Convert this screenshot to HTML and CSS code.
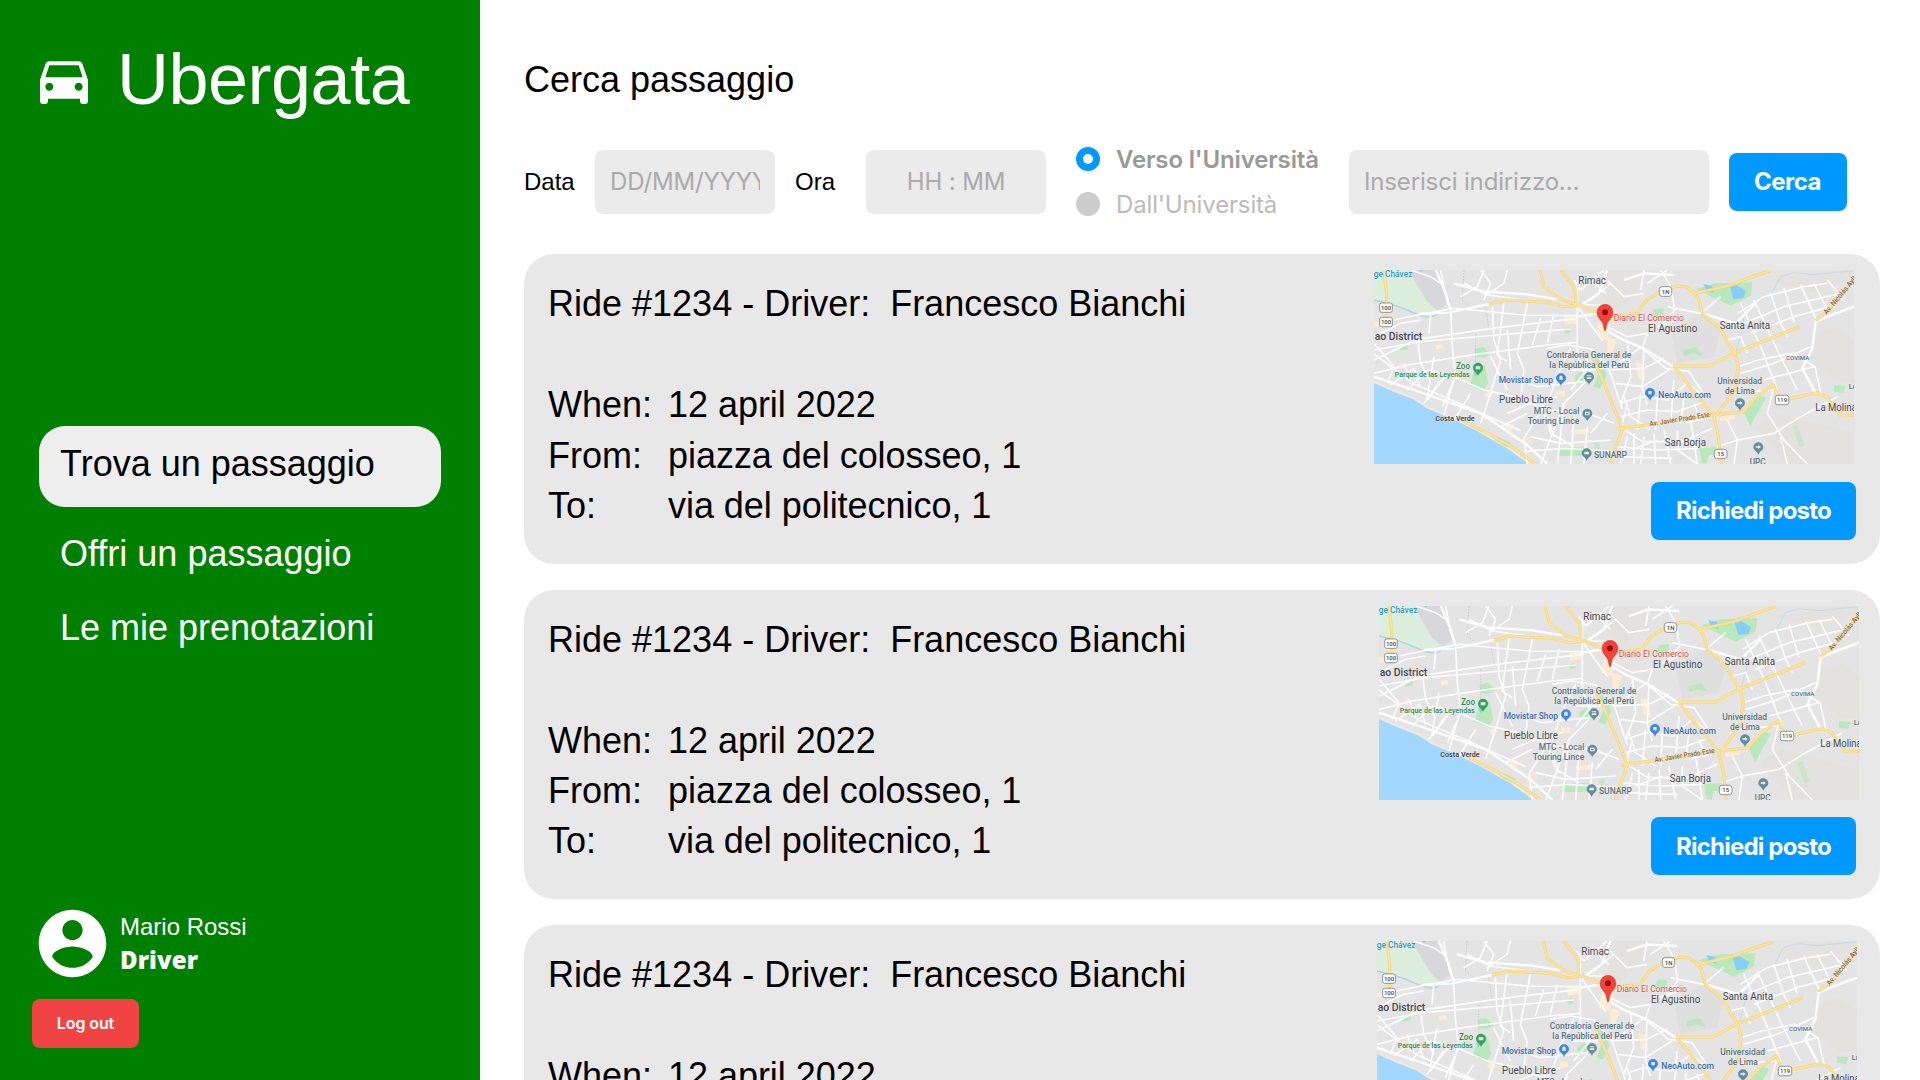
FILE: index.html
```html
<!DOCTYPE html>
<html lang="it">
<head>
<meta charset="utf-8">
<title>Ubergata</title>
<link rel="stylesheet" href="styles.css">
</head>
<body>
<div class="app">
  <aside class="sidebar">
    <header class="brand">
      <svg class="brand-icon" viewBox="0 0 24 24"><path d="M18.92 6.01C18.72 5.42 18.16 5 17.5 5h-11c-.66 0-1.21.42-1.42 1.01L3 12v8c0 .55.45 1 1 1h1c.55 0 1-.45 1-1v-1h12v1c0 .55.45 1 1 1h1c.55 0 1-.45 1-1v-8l-2.08-5.99zM6.5 16c-.83 0-1.5-.67-1.5-1.5S5.67 13 6.5 13s1.5.67 1.5 1.5S7.33 16 6.5 16zm11 0c-.83 0-1.5-.67-1.5-1.5s.67-1.5 1.5-1.5 1.5.67 1.5 1.5-.67 1.5-1.5 1.5zM5 11l1.5-4.5h11L19 11H5z"/></svg>
      <span class="brand-name">Ubergata</span>
    </header>
    <nav class="nav">
      <a class="nav-item active">Trova un passaggio</a>
      <a class="nav-item">Offri un passaggio</a>
      <a class="nav-item">Le mie prenotazioni</a>
    </nav>
    <div class="account">
      <div class="user">
        <svg class="avatar" viewBox="0 0 24 24"><path d="M12 2C6.48 2 2 6.48 2 12s4.48 10 10 10 10-4.48 10-10S17.52 2 12 2zm0 3c1.66 0 3 1.34 3 3s-1.34 3-3 3-3-1.34-3-3 1.34-3 3-3zm0 14.2c-2.5 0-4.71-1.28-6-3.22.03-1.99 4-3.08 6-3.08 1.99 0 5.97 1.09 6 3.08-1.29 1.94-3.5 3.22-6 3.22z"/></svg>
        <div class="user-text">
          <span class="user-name">Mario Rossi</span>
          <span class="user-role">Driver</span>
        </div>
      </div>
      <button class="logout">Log out</button>
    </div>
  </aside>

  <main class="content">
    <h1 class="title">Cerca passaggio</h1>
    <form class="search">
      <label class="field-label">Data</label>
      <input class="field field-date" placeholder="DD/MM/YYYY">
      <label class="field-label">Ora</label>
      <input class="field field-time" placeholder="HH : MM">
      <div class="radios">
        <div class="radio checked"><i class="dot"></i><span>Verso l'Università</span></div>
        <div class="radio"><i class="dot"></i><span>Dall'Università</span></div>
      </div>
      <input class="field field-address" placeholder="Inserisci indirizzo...">
      <button class="button" type="button">Cerca</button>
    </form>
    <section class="rides" id="rides"></section>
  </main>
</div>

<template id="ride-template">
  <article class="ride">
    <div class="ride-info">
      <p class="ride-head">Ride #1234 - Driver:  Francesco Bianchi</p>
      <dl class="ride-data">
        <dt>When:</dt><dd>12 april 2022</dd>
        <dt>From:</dt><dd>piazza del colosseo, 1</dd>
        <dt>To:</dt><dd>via del politecnico, 1</dd>
      </dl>
    </div>
    <div class="ride-side">
      <svg class="map" viewBox="0 0 1440 582">
        <rect width="1440" height="582" fill="#e4e4e5"/>
        <g fill="#e3e2df">
          <path d="M690 0h130l-40 75-55 50-50-60z"/><path d="M1330 190l60-20 50 40v130l-60-10-70-60z"/><path d="M1140 470l70-40 230 60v92h-200z"/><path d="M890 180l90-50 60 50-20 80-110 20z" fill="#dfdfdf"/><path d="M1190 30l100-20 150-10v20l-110 50z"/>
        </g>
        <path d="M0 0h105l55 95 38 28-50 6L60 112 0 90z" fill="#dcefdd"/>
        <path d="M103 0h80l45 95-38 27-30-27z" fill="#d8d8da"/>
        <path d="M0 335l60 27 60 23 40 27 90 38 60 30 90 52 70 50H0z" fill="#a2d8ff"/>
        <path d="M0 335l60 27 60 23 40 27 90 38 60 30 90 52 70 50" fill="none" stroke="#efe9df" stroke-width="7"/>
        <g fill="#b9e8bd">
          <path d="M300 300l32-15 10 55-15 22-40-15z"/><path d="M302 236l25-6 22 22-18 12-28-4z"/><path d="M78 225l20-3 4 16-24 4z"/><path d="M600 320l30-22 25 12-10 28-40 2z"/><path d="M655 272l18-8 25 50-20 42-20-6 15-40z"/><path d="M556 532h75l5 24-80 3z"/><path d="M965 58l60-18 110-3-5 40-60 30-25-12z"/><path d="M840 118l30-4-4 32-36-2z"/><path d="M928 240l40-8 18 26-30-8-26 8z"/><path d="M1108 425l50-48 18 8-35 60-12 24z"/><path d="M975 535l50-4v20l-22 6-5 24-15-2z"/><path d="M1380 345l35 4-8 20-27-4z"/><path d="M1255 470l15-5 22 60-15 8z" opacity=".6"/><path d="M570 178l15-7 5 15-15 5z"/><path d="M372 500l38 18-12 14-36-22z"/><path d="M660 520l16-3 2 45-16 4z" opacity=".7"/>
        </g>
        <path d="M988 42l26 6 6 20-22-4zM1068 52l20-6 28 18-8 20-30 4zM135 0h12l-7 5zM298 305l12 5-6 10z" fill="#86cdf8"/>
        <g fill="#fbecd2">
          <path d="M570 140l40-8v28l-38 4z"/><path d="M672 160l38 5-12 45-30-8z"/><path d="M700 200l30 10-18 45-12-5z"/><path d="M785 275l24 8 6 50-22-8z"/><path d="M395 460l25 5-8 20-20-8z"/><path d="M185 225l20-3 4 12-22 5z"/><path d="M1038 440l45-8v14l-45 8z"/><path d="M546 362h28v16l-24 4z"/><path d="M590 480l50-4v16h-48z"/><path d="M330 372l20-8 6 14-18 8z"/><path d="M0 155h20v14H0z"/>
        </g>
        <path d="M50 298l38-24 12 20-22 6zM443 510l25-12 8 22-32 8zM268 258l24-4v20z" fill="#f8e1e1"/>
        <path d="M0 90q60 12 115 37t75 3l155-28" fill="none" stroke="#a5d5e6" stroke-width="4"/>
        <path d="M1190 75l30-55 40-12 60 6 120-12M1085 250l20-70 5-60" fill="none" stroke="#bcd8ea" stroke-width="2.5"/>
        <path d="M270 0l-5 90 30 25M305 190v130M148 370l30-15M335 110l10 70" fill="none" stroke="#bfbfc3" stroke-width="2" stroke-dasharray="5 4"/>
        <g class="roads minor">
          <path d="M60 150l70-15 110-20 210 20 160 2M0 270l130-62 240-35 240-28M0 240l140-25 230-20 220-18M0 310l100-25 180-28 240-32 90-8M0 252l120 90 140 60 180 80"/>
          <path d="M200 0l15 80 15 40 5 110 10 90-40 90M170 130l-5 60M130 200l10 80 30 60M270 40l70 35 110 15 60 5M330 0l-20 50-50 30M355 110l5 100 20 60-40 130-20 60M390 95l-20 160 30 20M460 100l-30 150 20 50M500 145l-25 80M540 130l-20 90"/>
          <path d="M90 280l20 50M60 290l-20 50M180 260l-20 120M200 330l-50 70M100 360l60-60 80 20 90 40 90 20M240 325l-30 110M290 370l-50 80M350 260l50 100M400 180l10 120"/>
          <path d="M610 50v200l20 60-40 50M606 102l50 70 30 40M640 20l55 50M620 60l70-60M650 90l60-50M620 60l-20-30M700 30l50 50 60-10M800 60l10-60M820 40l60-40M860 0l30 50 12 70-30 40M880 110l100 20 60-50"/>
          <path d="M520 235l60-10 70 12 55 60 40 120M590 235l-40 80-20 60-80 130 10 77M640 260l-10 80-60 60-70 182M440 390l90 30 110 10 80 30M400 430l70-30 80-20M380 470l80-40M470 500l90 20 150-10M450 545l120-10 150 10M500 400l30 90 70 40M570 400l-20 182M520 440l20 60M600 440l-10 142M640 470l-10 112M430 330l60 20 140-15M450 300l-10 90"/>
          <path d="M700 170l60 30 60-10-15 45 70 60 70 10 40 60M800 232l-80 60M810 235l-5 120 15 50M760 210l10 110-30 80M700 300l110-5 60-30M725 340l80 10 80-50M740 400l60-20 80 10 60-50 40 30M750 380l20 60 60 40M740 440l80-20 90 5 80-30M760 400l-20 80M800 370l-10 110M850 380l-5 100M900 330l-10 130M930 380l-10 80M960 400l20 50"/>
          <path d="M745 475l60 40 120 0 90-40M760 500l-20 82M780 490v92M810 500l-10 82M840 490l5 92M720 530l130 10 120-5M735 560l160 5M870 480l20 102M910 480v60l60 42M700 430l-50 60M950 450l20 132M770 540l80-30M1060 450l30 60-10 72M1090 510l110-20 80-50 110-60M1200 350l-20 80 50 80 70 72M1220 500l20 82M1090 510l-60 20"/>
          <path d="M1093 290l60-20 100-20 70 40 20 90M1100 310l100-30 110-50M1080 370l110-10M1170 330l150-40M1100 100l60 130 50 130M1140 90l70 150 60 120M1060 210l40-10 20 50M1090 130l80-50 120-30 70-10M1110 160l120-50 170-40M1130 190l130-50 110-30M1190 70l30 90 20 40M1230 55l30 100M1280 45l50 110M1320 40l40 80M1360 30l50 60"/>
          <path d="M650 300l70-10M320 0l30 40-20 50M400 0l-10 40-60 40M110 0l60 20 30 20M0 200l80-40 60-10M0 220l60 70M620 105l70 0M590 300l70 0M50 345l70-50 20 60M160 390l60-80"/>
        </g>
        <g class="roads white">
          <path d="M185 0l30 70 15 50M345 102l-120 25-90 5M240 40l90 25 130 8 90 15"/>
          <path d="M1440 110l-80 30-35 15-10 80-30 60 40 75M985 130l100 30 60-60M898 290l-90-55-70-30-50-30M1018 437l-80 20M700 0l-25 70-60 40M750 30l60-20 90 5"/>
          <path d="M0 320l120 40 200 70 140 95 60 57M610 140l60-10M850 170l80-30"/>
        </g>
        <g class="roads edge"><path d="M30 0l8 75v85M345 102l55-12 120 7 50 13 50-5 48 22M498 0l12 50 50 38 45 15M560 0l43 55 3 47M700 140l88-10 30-40 40-25 50-17 27 2 28 20 97-22 90-33 40-13M950 60l23 25 12 45 53 45 22 40 23 35 10 40-13 75-50 65-10 10 13 60 10 82M898 288h110l70-38 100-40 100-40M898 288l120 149M728 477l110-15 180-27 90-10 40-45 50-36 20 48 110-24 30 12 40 55 42 1M655 262l35 78 55 137-30 83-5 22M270 455l80 40 70 40 65 47M1325 152l43-34 72-93"/></g>
        <g class="roads yellow"><path d="M30 0l8 75v85M345 102l55-12 120 7 50 13 50-5 48 22M498 0l12 50 50 38 45 15M560 0l43 55 3 47M700 140l88-10 30-40 40-25 50-17 27 2 28 20 97-22 90-33 40-13M950 60l23 25 12 45 53 45 22 40 23 35 10 40-13 75-50 65-10 10 13 60 10 82M898 288h110l70-38 100-40 100-40M898 288l120 149M728 477l110-15 180-27 90-10 40-45 50-36 20 48 110-24 30 12 40 55 42 1M655 262l35 78 55 137-30 83-5 22M270 455l80 40 70 40 65 47M1325 152l43-34 72-93"/></g>
        <g class="shields">
          <rect x="17" y="99" width="38" height="28" rx="6"/><rect x="17" y="142" width="38" height="28" rx="6"/><rect x="856" y="50" width="37" height="29" rx="8"/><rect x="1204" y="376" width="40" height="28" rx="6"/><rect x="1021" y="538" width="38" height="28" rx="8"/>
        </g>
        <g class="shield-text">
          <text x="36" y="120">100</text><text x="36" y="163">100</text><text x="875" y="72">1N</text><text x="1224" y="397">119</text><text x="1040" y="559">15</text>
        </g>
        <g class="pins">
          <g fill="#35a457"><path d="M312 318c-4-12-15-13-15-25a15 15 0 0 1 30 0c0 12-11 13-15 25z"/></g>
          <g fill="#3f87e5"><path d="M561 348c-4-12-15-13-15-23a15 15 0 0 1 30 0c0 10-11 11-15 23zM828 392c-4-12-15-13-15-23a15 15 0 0 1 30 0c0 10-11 11-15 23z"/></g>
          <g fill="#668d9e"><path d="M645 345c-4-12-15-13-15-23a15 15 0 0 1 30 0c0 10-11 11-15 23zM640 454c-4-12-15-13-15-23a15 15 0 0 1 30 0c0 10-11 11-15 23zM638 573c-4-12-15-13-15-23a15 15 0 0 1 30 0c0 10-11 11-15 23zM1098 423c-4-12-15-13-15-23a15 15 0 0 1 30 0c0 10-11 11-15 23zM1153 555c-4-12-15-13-15-23a15 15 0 0 1 30 0c0 10-11 11-15 23z"/></g>
          <g fill="#e9f2f5"><path d="M305 289h14v9h-14zM556 320l5-4 5 4v9h-10zM823 363h10v10h-10zM638 316h14v3h-14zM638 322h14v5h-14zM633 425h14v11h-14zM636 429v4h8v-4zM631 545h14v8h-14zM1090 397h8v-4l8 6-8 6v-4h-8zM1145 529h8v-4l8 6-8 6v-4h-8z"/></g>
        </g>
        <g class="places">
          <text x="613" y="43" textLength="83" lengthAdjust="spacingAndGlyphs">Rimac</text>
          <text class="strong" x="2" y="209" textLength="143" lengthAdjust="spacingAndGlyphs">ao District</text>
          <text x="375" y="400" textLength="162" lengthAdjust="spacingAndGlyphs">Pueblo Libre</text>
          <text x="822" y="187" textLength="148" lengthAdjust="spacingAndGlyphs">El Agustino</text>
          <text x="1037" y="176" textLength="151" lengthAdjust="spacingAndGlyphs">Santa Anita</text>
          <text x="872" y="529" textLength="124" lengthAdjust="spacingAndGlyphs">San Borja</text>
          <text x="1324" y="424" textLength="124" lengthAdjust="spacingAndGlyphs">La Molina</text>
        </g>
        <g class="poi">
          <text class="air" x="-1" y="22" textLength="116" lengthAdjust="spacingAndGlyphs">ge Chávez</text>
          <text class="green" x="246" y="296" textLength="42" lengthAdjust="spacingAndGlyphs">Zoo</text>
          <text class="green small" x="62" y="320" textLength="225" lengthAdjust="spacingAndGlyphs">Parque de las Leyendas</text>
          <text x="518" y="264" textLength="254" lengthAdjust="spacingAndGlyphs">Contraloría General de</text>
          <text x="526" y="293" textLength="239" lengthAdjust="spacingAndGlyphs">la República del Perú</text>
          <text class="blue" x="374" y="340" textLength="163" lengthAdjust="spacingAndGlyphs">Movistar Shop</text>
          <text x="479" y="431" textLength="137" lengthAdjust="spacingAndGlyphs">MTC - Local</text>
          <text x="461" y="462" textLength="155" lengthAdjust="spacingAndGlyphs">Touring Lince</text>
          <text class="dark small" x="184" y="452" textLength="118" lengthAdjust="spacingAndGlyphs">Costa Verde</text>
          <text x="660" y="564" textLength="99" lengthAdjust="spacingAndGlyphs">SUNARP</text>
          <text class="red" x="719" y="152" textLength="211" lengthAdjust="spacingAndGlyphs">Diario El Comercio</text>
          <text class="tiny" x="1236" y="271" textLength="70" lengthAdjust="spacingAndGlyphs">COVIMA</text>
          <text x="1030" y="342" textLength="134" lengthAdjust="spacingAndGlyphs">Universidad</text>
          <text x="1053" y="371" textLength="89" lengthAdjust="spacingAndGlyphs">de Lima</text>
          <text class="blue" x="853" y="385" textLength="158" lengthAdjust="spacingAndGlyphs">NeoAuto.com</text>
          <text class="small" x="1424" y="358">La</text>
          <text x="1127" y="586" textLength="48" lengthAdjust="spacingAndGlyphs">UPC</text>
          <text class="brown" transform="translate(828 469) rotate(-9)" textLength="182" lengthAdjust="spacingAndGlyphs">Av. Javier Prado Este</text>
          <text class="brown" transform="translate(1358 135) rotate(-50)" textLength="165" lengthAdjust="spacingAndGlyphs">Av. Nicolás Ayllón</text>
        </g>
        <path d="M693 183c-4 0-3-18-9-27-6-8-15-16-15-29a24 24 0 0 1 48 0c0 13-9 21-15 29-6 9-5 27-9 27z" fill="#f0433a" stroke="#d3372f" stroke-width="1.5"/>
        <circle cx="693" cy="127" r="9" fill="#9a0d10"/>
      </svg>
      <button class="button">Richiedi posto</button>
    </div>
  </article>
</template>
<script src="app.js"></script>
</body>
</html>
```

FILE: app.js
```js
// Fill the results list with one card per ride.
const list = document.getElementById('rides');
const template = document.getElementById('ride-template');
for (let i = 0; i < 3; i++) {
  list.appendChild(template.content.cloneNode(true));
}
```

FILE: styles.css
```css
* { box-sizing: border-box; }

body {
  margin: 0;
  background: #fff;
  color: #000;
  font-family: "Liberation Sans", Arial, sans-serif;
}

.app {
  display: flex;
  width: 1920px;
  height: 1080px;
  overflow: hidden;
}

.sidebar {
  display: flex;
  flex-direction: column;
  flex: none;
  width: 480px;
  padding: 38px 39px 32px 32px;
  background: #008000;
  color: #fff;
}

.brand {
  display: flex;
  align-items: center;
  gap: 21px;
  height: 82px;
}

.brand-icon { width: 64px; height: 64px; margin-top: 2px; fill: #fff; }
.brand-name { font-size: 72px; line-height: 82px; letter-spacing: -.5px; }

.nav {
  display: flex;
  flex-direction: column;
  margin: 306px 0 auto 7px;
}

.nav-item {
  padding: 17px 21px 16px;
  font-size: 36px;
  line-height: 41px;
}

.nav-item.active {
  height: 81px;
  margin-bottom: 9px;
  border-radius: 26px;
  background: #eee;
  color: #000;
}

.account {
  display: flex;
  flex-direction: column;
  align-items: flex-start;
  gap: 15px;
}

.user { display: flex; align-items: center; gap: 8px; }
.avatar { width: 81px; height: 81px; margin-right: -1px; fill: #fff; }
.user-text { display: flex; flex-direction: column; padding-bottom: 2px; font-size: 24px; line-height: 33px; }
.user-role { font-family: "Noto Sans", sans-serif; font-weight: 900; letter-spacing: .1px; }

.logout {
  width: 107px;
  height: 49px;
  padding: 0 0 2px;
  border: 0;
  border-radius: 8px;
  background: #f04444;
  color: #fff;
  font: 600 16px Inter, sans-serif;
  letter-spacing: -.1px;
}

.content {
  flex: 1;
  min-width: 0;
  padding: 59px 40px 0 44px;
}

.title { margin: 0; font-size: 36px; font-weight: 400; line-height: 41px; }

.search {
  display: flex;
  align-items: center;
  height: 80px;
  margin-top: 42px;
}

.field-label { width: 51px; margin-right: 20px; font-size: 24px; }

.field {
  width: 180px;
  height: 64px;
  margin-right: 20px;
  padding: 0 15px 1px;
  border: 0;
  border-radius: 8px;
  background: #ebebeb;
  font: 400 24px Inter, sans-serif;
  letter-spacing: -.15px;
}

.field::placeholder { color: #aaa; opacity: 1; }
.field-time { margin-right: 30px; text-align: center; }
.field-address { width: 360px; }

.radios {
  display: flex;
  flex-direction: column;
  gap: 16px;
  width: 273px;
  padding-bottom: 1px;
}

.radio {
  display: flex;
  align-items: center;
  gap: 16px;
  color: #bbb;
  font: 400 24px/29px Inter, sans-serif;
  letter-spacing: -.15px;
}

.dot { width: 24px; height: 24px; border-radius: 50%; background: #ccc; }
.radio.checked { color: #999; font-weight: 600; }
.radio.checked .dot { border: 7px solid #09f; background: #fff; }

.button {
  height: 58px;
  padding: 0 25px;
  border: 0;
  border-radius: 8px;
  background: #09f;
  color: #fff;
  font: 700 24px Inter, sans-serif;
  letter-spacing: -.5px;
}

.search .button { width: 118px; padding: 0 1px 1px 0; }

.rides {
  display: flex;
  flex-direction: column;
  gap: 26px;
  margin-top: 32.4px;
}

.ride {
  display: flex;
  justify-content: space-between;
  flex: none;
  height: 309.4px;
  padding: 16px 24px 0;
  border-radius: 30px;
  background: #e8e8e8;
}

.ride-info { padding-top: 9px; font-size: 36px; line-height: 50.4px; }
.ride-head { margin: 0 0 50.4px; white-space: pre; }

.ride-data {
  display: grid;
  grid-template-columns: 120px auto;
  margin: 0;
}

.ride-data dd { margin: 0; letter-spacing: -.04px; }

.ride-side {
  display: flex;
  flex-direction: column;
  align-items: flex-end;
  gap: 17.3px;
}

.ride-side .button { width: 205px; padding: 0; letter-spacing: -.8px; }

.map { display: block; width: 480px; height: 194px; margin-right: 2px; }
.ride:nth-child(2) .map { margin-right: -3px; }
.ride:nth-child(3) .map { margin-right: -1px; }

.roads { fill: none; stroke: #fff; stroke-linejoin: round; }
.roads.minor { stroke-width: 5; opacity: .9; }
.roads.white { stroke-width: 7; }
.roads.edge { stroke: #f3d27c; stroke-width: 9; }
.roads.yellow { stroke: #fde293; stroke-width: 6; }

.map text { font-family: Roboto, sans-serif; }
.places text { fill: #45474f; font-size: 31px; }
.places .strong { font-weight: 500; }
.poi text { fill: #587482; font-size: 27px; font-weight: 500; }
.places text, .poi text { stroke: #f0f0f0; stroke-width: 2px; paint-order: stroke; }
.poi .air { fill: #2b9cc3; }
.poi .green { fill: #2f8a48; }
.poi .blue { fill: #3b6cab; }
.poi .red { fill: #d94d44; font-weight: 400; }
.poi .dark { fill: #333; }
.poi .small { font-size: 22px; }
.poi .tiny { font-size: 18px; }
.poi .brown { fill: #8a6528; font-size: 22px; }
.shields rect { fill: #fff; stroke: #666; stroke-width: 2; }
.shield-text text { fill: #444; font-size: 18px; font-weight: 500; text-anchor: middle; }
```
